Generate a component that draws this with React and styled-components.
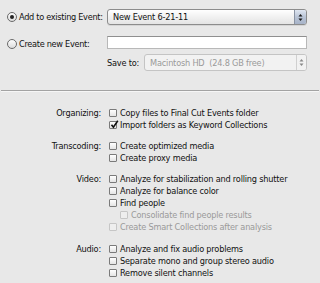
import React from "react"
import styled, { createGlobalStyle } from 'styled-components'

const Global = createGlobalStyle`
  html, body {
    margin: 0;
    padding: 0;
    background: #e8e8e8;
  }
  body {
    font-family: 'DejaVu Sans', 'Liberation Sans', sans-serif;
    font-size: 8.2px;
    letter-spacing: -0.2px;
    color: #111;
  }
`

const Page = styled.div`
  width: 320px;
  height: 283px;
  background: #e8e8e8;
  overflow: hidden;
`

const Top = styled.div`
  padding: 9px 13px 0 7px;
  display: flex;
  flex-direction: column;
`

const Row = styled.div`
  display: flex;
  align-items: center;
  height: ${p => p.h}px;
  margin-top: ${p => p.mt || 0}px;
`

const Choice = styled.label`
  width: 100px;
  flex: none;
  display: flex;
  align-items: center;
  gap: 2px;
  white-space: nowrap;
  letter-spacing: -0.3px;
  position: relative;
  top: ${p => p.shift || 0}px;
`

const Radio = styled.span`
  width: 8px;
  height: 8px;
  border-radius: 50%;
  border: 1px solid #6a6a6a;
  background: linear-gradient(#fdfdfd, #dcdcdc);
  display: flex;
  align-items: center;
  justify-content: center;
  flex: none;
  &::after {
    content: '';
    width: 4px;
    height: 4px;
    border-radius: 50%;
    background: ${p => (p.on ? '#222' : 'transparent')};
  }
`

const Select = styled.div`
  flex: 1;
  height: 100%;
  box-sizing: border-box;
  border: 1px solid ${p => (p.disabled ? '#c4c4c4' : '#8c8c8c')};
  border-radius: 3px;
  background: ${p => (p.disabled ? '#f2f2f2' : 'linear-gradient(#ffffff, #f1f1f1 50%, #e4e4e4)')};
  display: flex;
  align-items: center;
  overflow: hidden;
  color: ${p => (p.disabled ? '#9a9a9a' : '#111')};
  box-shadow: ${p => (p.disabled ? 'none' : '0 1px 0 rgba(0,0,0,0.08)')};
`

const SelectText = styled.span`
  flex: 1;
  padding-left: 5px;
  white-space: pre;
`

const Stepper = styled.span`
  width: ${p => (p.disabled ? 9 : 11)}px;
  height: 100%;
  flex: none;
  border-left: 1px solid ${p => (p.disabled ? '#d0d0d0' : '#8a93a3')};
  background: ${p => (p.disabled ? '#f2f2f2' : 'linear-gradient(#dfe6f1, #b9c4d6 50%, #a7b3c8)')};
  display: flex;
  align-items: center;
  justify-content: center;
  svg { display: block; }
`

const TextInput = styled.div`
  flex: 1;
  height: 100%;
  box-sizing: border-box;
  background: #fff;
  border: 1px solid #b8b8b8;
  border-top-color: #8f8f8f;
`

const SaveLabel = styled.span`
  margin-left: 100px;
  margin-right: 5px;
  white-space: nowrap;
`

const Sep = styled.div`
  margin: 19px 1px 0 1px;
  height: 1px;
  background: #a3a3a3;
  box-shadow: 0 1px 0 #f6f6f6;
`

const Options = styled.div`
  padding-top: 16px;
  display: flex;
  flex-direction: column;
`

const Group = styled.div`
  display: grid;
  grid-template-columns: 101px 1fr;
  column-gap: 8px;
  margin-top: ${p => p.gap || 0}px;
`

const GroupLabel = styled.div`
  text-align: right;
  line-height: 12px;
  white-space: nowrap;
`

const Items = styled.div`
  display: flex;
  flex-direction: column;
`

const Item = styled.div`
  height: 12px;
  display: flex;
  align-items: center;
  gap: 3px;
  padding-left: ${p => (p.indent ? 11 : 0)}px;
  color: ${p => (p.disabled ? '#9a9a9a' : '#111')};
  white-space: nowrap;
`

const Box = styled.span`
  width: 8px;
  height: 8px;
  box-sizing: border-box;
  flex: none;
  border: 1px solid ${p => (p.disabled ? '#c6c6c6' : '#7a7a7a')};
  border-radius: 1px;
  background: ${p => (p.disabled ? '#eeeeee' : 'linear-gradient(#ffffff, #e4e4e4)')};
  position: relative;
  svg {
    position: absolute;
    left: 0px;
    top: -2px;
  }
`

const Arrows = ({ color }) => (
  <svg width="5" height="9" viewBox="0 0 5 9">
    <path d="M0.5 3.5 L2.5 1 L4.5 3.5 Z" fill={color} />
    <path d="M0.5 5.5 L2.5 8 L4.5 5.5 Z" fill={color} />
  </svg>
)

const Check = ({ label, checked, disabled, indent }) => (
  <Item disabled={disabled} indent={indent}>
    <Box disabled={disabled}>
      {checked && (
        <svg width="9" height="9" viewBox="0 0 9 9">
          <path d="M1.5 4.8 L3.4 7.2 L7.8 0.8" stroke="#111" strokeWidth="1.6" fill="none" />
        </svg>
      )}
    </Box>
    {label}
  </Item>
)

const groups = [
  {
    label: 'Organizing:',
    gap: 0,
    items: [
      { label: 'Copy files to Final Cut Events folder' },
      { label: 'Import folders as Keyword Collections', checked: true },
    ],
  },
  {
    label: 'Transcoding:',
    gap: 8.5,
    items: [
      { label: 'Create optimized media' },
      { label: 'Create proxy media' },
    ],
  },
  {
    label: 'Video:',
    gap: 9,
    items: [
      { label: 'Analyze for stabilization and rolling shutter' },
      { label: 'Analyze for balance color' },
      { label: 'Find people' },
      { label: 'Consolidate find people results', disabled: true, indent: true },
      { label: 'Create Smart Collections after analysis', disabled: true },
    ],
  },
  {
    label: 'Audio:',
    gap: 10,
    items: [
      { label: 'Analyze and fix audio problems' },
      { label: 'Separate mono and group stereo audio' },
      { label: 'Remove silent channels' },
    ],
  },
]

const App = () => {
  return (
    <Page>
      <Global />
      <Top>
        <Row h={16}>
          <Choice>
            <Radio on />
            Add to existing Event:
          </Choice>
          <Select>
            <SelectText>New Event 6-21-11</SelectText>
            <Stepper>
              <Arrows color="#1a1a1a" />
            </Stepper>
          </Select>
        </Row>

        <Row h={13} mt={11}>
          <Choice shift={1.5}>
            <Radio />
            Create new Event:
          </Choice>
          <TextInput />
        </Row>

        <Row h={17} mt={5}>
          <SaveLabel>Save to:</SaveLabel>
          <Select disabled>
            <SelectText>{'Macintosh HD  (24.8 GB free)'}</SelectText>
            <Stepper disabled>
              <Arrows color="#888" />
            </Stepper>
          </Select>
        </Row>
      </Top>

      <Sep />

      <Options>
        {groups.map(g => (
          <Group key={g.label} gap={g.gap}>
            <GroupLabel>{g.label}</GroupLabel>
            <Items>
              {g.items.map(it => (
                <Check key={it.label} {...it} />
              ))}
            </Items>
          </Group>
        ))}
      </Options>
    </Page>
  )
}

export default App
